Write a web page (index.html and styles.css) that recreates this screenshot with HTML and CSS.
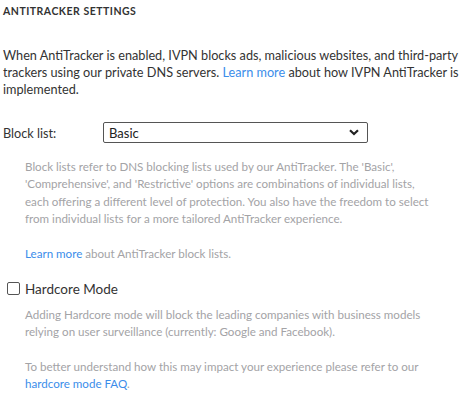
FILE: index.html
```html
<!DOCTYPE html>
<html>
<head>
<meta charset="utf-8">
<link rel="stylesheet" href="styles.css">
</head>
<body>
<div class="page">
  <div class="title">AntiTracker settings</div>
  <p class="intro">When AntiTracker is enabled, IVPN blocks ads, malicious websites, and <span class="nowrap">third-party</span> trackers using our private DNS servers. <a class="link" href="#">Learn more</a> about how IVPN AntiTracker is implemented.</p>
  <div class="row">
    <label class="row-label">Block list:</label>
    <div class="select">
      <span>Basic</span>
      <svg class="chev" width="10" height="7" viewBox="0 0 10 7"><path d="M1 1.2 L5 5 L9 1.2" fill="none" stroke="#222" stroke-width="2.2"/></svg>
    </div>
  </div>
  <div class="desc">
    <p>Block lists refer to DNS blocking lists used by our AntiTracker. The 'Basic', 'Comprehensive', and 'Restrictive' options are combinations of individual lists, each offering a different level of protection. You also have the freedom to select from individual lists for a more tailored AntiTracker experience.</p>
    <p><a class="link" href="#">Learn more</a> about AntiTracker block lists.</p>
  </div>
  <div class="check-row">
    <span class="checkbox"></span>
    <span class="check-label">Hardcore Mode</span>
  </div>
  <div class="desc">
    <p>Adding Hardcore mode will block the leading companies with business models relying on user surveillance (currently: Google and Facebook).</p>
    <p>To better understand how this may impact your experience please refer to our <a class="link" href="#">hardcore mode FAQ</a>.</p>
  </div>
</div>
</body>
</html>
```
FILE: styles.css
```css
html, body { margin: 0; padding: 0; background: #fff; }
body { font-family: Lato, "Noto Sans", sans-serif; font-size: 12.7px; color: #333; }
.page { padding: 0 0 0 3px; width: 460px; }
.title { text-transform: uppercase; font-size: 10.5px; font-weight: 700; letter-spacing: 0.5px; color: #333; line-height: 14px; padding-top: 4px; }
.intro { margin: 29px 0 0 0; line-height: 17px; }
.nowrap { white-space: nowrap; }
.link { color: #3b8dea; text-decoration: none; }
.row { display: flex; align-items: center; margin-top: 24px; }
.row-label { width: 100px; }
.select { width: 250px; height: 19px; border: 1px solid #555; border-radius: 2px; display: flex; align-items: center; justify-content: space-between; padding: 0 8px 0 5px; font-size: 13px; color: #222; }
.chev { display: block; }
.desc { margin-left: 22px; width: 412px; color: #a3a3a6; font-size: 11.6px; line-height: 17.3px; }
.desc p { margin: 0; }
.desc p + p { margin-top: 17.5px; }
.row + .desc { margin-top: 15px; }
.check-row { display: flex; align-items: center; margin-top: 19px; }
.checkbox { width: 11px; height: 11px; border: 1.2px solid #555; border-radius: 2px; margin-left: 4px; }
.check-label { margin-left: 5px; font-size: 13.5px; color: #333; }
.check-row + .desc { margin-top: 9px; }
```
